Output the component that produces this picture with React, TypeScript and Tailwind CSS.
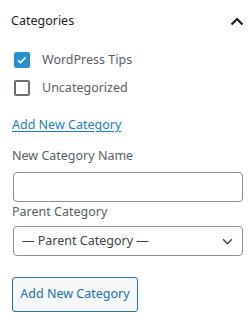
import React, { useState } from "react";

const font = { fontFamily: '"Noto Sans", "Open Sans", sans-serif' };

const Checkbox: React.FC<{ checked: boolean; label: string; onToggle: () => void }> = ({ checked, label, onToggle }) => (
  <label className="flex items-center gap-[12px] pl-[14px] cursor-pointer" onClick={onToggle}>
    {checked ? (
      <span className="w-[16px] h-[16px] rounded-[2px] bg-[#2a8fd1] flex items-center justify-center">
        <svg viewBox="0 0 16 16" className="w-[12px] h-[12px]" fill="none" stroke="white" strokeWidth="2">
          <path d="M3 8.5l3 3 7-7" />
        </svg>
      </span>
    ) : (
      <span className="w-[16px] h-[16px] rounded-[2px] border-[2px] border-[#6b6f75] bg-white" />
    )}
    <span className="text-[12.5px] leading-[18px] text-[#5a5f66]">{label}</span>
  </label>
);

export default function App() {
  const [tips, setTips] = useState(true);
  const [uncat, setUncat] = useState(false);

  return (
    <div className="w-[252px] h-[330px] bg-white" style={font}>
      <div className="h-[42px] flex items-center justify-between pl-[11px] pr-[8px]">
        <span className="text-[12.5px] text-[#1e1e1e]">Categories</span>
        <svg viewBox="0 0 14 9" className="w-[14px] h-[9px]" fill="none" stroke="#1e1e1e" strokeWidth="2.2">
          <path d="M1.5 7.5L7 2l5.5 5.5" />
        </svg>
      </div>

      <div className="flex flex-col gap-[10px] pt-[9px]">
        <Checkbox checked={tips} label="WordPress Tips" onToggle={() => setTips(!tips)} />
        <Checkbox checked={uncat} label="Uncategorized" onToggle={() => setUncat(!uncat)} />
      </div>

      <div className="px-[12px] mt-[19px]">
        <a href="#" className="block text-[12.5px] leading-[18px] text-[#1d7fb8] underline underline-offset-2">
          Add New Category
        </a>

        <div className="mt-[13px] text-[12.5px] leading-[18px] text-[#5a5f66]">New Category Name</div>
        <input
          type="text"
          className="mt-[7px] block w-[230px] h-[30px] ml-[1px] rounded-[4px] border border-[#8c8f94] px-[8px] text-[13px] outline-none"
        />

        <div className="mt-[1px] text-[12.5px] leading-[18px] text-[#5a5f66]">Parent Category</div>
        <div className="mt-[5px] ml-[1px] w-[230px] h-[30px] rounded-[4px] border border-[#8c8f94] flex items-center justify-between pl-[8px] pr-[9px]">
          <span className="text-[12.5px] text-[#3c434a]">— Parent Category —</span>
          <svg viewBox="0 0 12 8" className="w-[11px] h-[7px]" fill="none" stroke="#3c434a" strokeWidth="1.6">
            <path d="M1 1.5l5 5 5-5" />
          </svg>
        </div>

        <button className="mt-[21px] w-[126px] h-[35px] rounded-[3px] border border-[#2271b1] bg-[#f6f7f7] text-[12.5px] text-[#2271b1]">
          Add New Category
        </button>
      </div>
    </div>
  );
}
